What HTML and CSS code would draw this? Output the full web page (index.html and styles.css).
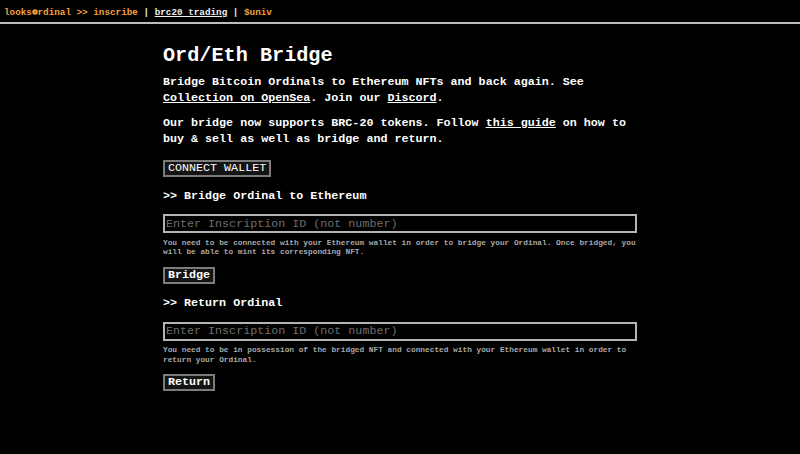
FILE: index.html
```html
<!DOCTYPE html>
<html>
<head>
<meta charset="utf-8">
<title>Ord/Eth Bridge</title>
<link rel="stylesheet" href="styles.css">
</head>
<body>
<nav class="nav">
  <span class="orange">looks<span class="eye"><svg viewBox="0 0 10 10" width="6" height="6"><circle cx="5" cy="5" r="4.6" fill="#f2a03c"/><circle cx="5.4" cy="5" r="1.4" fill="#7a4a18"/></svg></span>rdinal &gt;&gt; inscribe</span> <span class="sep">|</span> <a class="navlink" href="#">brc20 trading</a> <span class="sep">|</span> <span class="orange">$univ</span>
</nav>
<main class="wrap">
  <h1 class="title">Ord/Eth Bridge</h1>
  <p class="lead">Bridge Bitcoin Ordinals to Ethereum NFTs and back again. See <a href="#">Collection on OpenSea</a>. Join our <a href="#">Discord</a>.</p>
  <p class="lead second">Our bridge now supports BRC-20 tokens. Follow <a href="#">this guide</a> on how to buy &amp; sell as well as bridge and return.</p>
  <button class="btn connect">CONNECT WALLET</button>

  <h2 class="section">&gt;&gt; Bridge Ordinal to Ethereum</h2>
  <input class="field" type="text" placeholder="Enter Inscription ID (not number)">
  <p class="note">You need to be connected with your Ethereum wallet in order to bridge your Ordinal. Once bridged, you will be able to mint its corresponding NFT.</p>
  <button class="btn action">Bridge</button>

  <h2 class="section">&gt;&gt; Return Ordinal</h2>
  <input class="field" type="text" placeholder="Enter Inscription ID (not number)">
  <p class="note">You need to be in possession of the bridged NFT and connected with your Ethereum wallet in order to return your Ordinal.</p>
  <button class="btn action">Return</button>
</main>
</body>
</html>
```

FILE: styles.css
```css
html, body {
  margin: 0;
  padding: 0;
  background: #000;
  color: #fff;
  font-family: "Liberation Mono", "Courier New", monospace;
}

.nav {
  font-size: 9.3px;
  font-weight: bold;
  line-height: 12px;
  padding: 6.5px 4px 3.5px;
  border-bottom: 2px solid #bdbdbd;
  white-space: nowrap;
  color: #e8e8e8;
}

.orange {
  color: #f2a03c;
}

.eye {
  display: inline-block;
  width: 0.6em;
  text-align: center;
}

.eye svg {
  display: inline-block;
  vertical-align: -0.5px;
}

.sep {
  color: #e8e8e8;
}

.navlink {
  color: #eeeeee;
  text-decoration: underline;
}

.wrap {
  width: 474px;
  margin: 0 auto;
  display: flex;
  flex-direction: column;
  align-items: flex-start;
}

.title {
  font-size: 20.2px;
  line-height: 24px;
  font-weight: bold;
  margin: 20.3px 0 0;
}

.lead {
  font-size: 11.7px;
  line-height: 16px;
  font-weight: bold;
  margin: 5.6px 0 0;
}

.lead.second {
  margin-top: 8.7px;
}

.lead a {
  color: #fff;
  text-decoration: underline;
}

.btn {
  font-family: "Liberation Mono", "Courier New", monospace;
  font-size: 11.7px;
  line-height: 13px;
  padding: 0 3px;
  height: 17px;
  background: #141414;
  color: #fff;
  border: 2px solid #7c7c7c;
  border-radius: 0;
  box-sizing: border-box;
}

.connect {
  font-weight: normal;
  margin-top: 13px;
}

.action {
  font-weight: bold;
  margin-top: 8.8px;
}

.section {
  font-size: 11.7px;
  line-height: 16px;
  font-weight: bold;
  margin: 11.4px 0 0;
}

.field {
  display: block;
  width: 100%;
  height: 19px;
  box-sizing: border-box;
  margin-top: 10.4px;
  padding: 0 0 0 1px;
  background: #000;
  color: #fff;
  border: 2px solid #b4b4b4;
  border-radius: 0;
  font-family: "Liberation Mono", "Courier New", monospace;
  font-size: 11.7px;
  outline: none;
}

.field::placeholder {
  color: #6e6e6e;
}

.note {
  font-size: 7.8px;
  line-height: 9.5px;
  font-weight: bold;
  color: #a8a8a8;
  margin: 5.6px 0 0;
}
```
